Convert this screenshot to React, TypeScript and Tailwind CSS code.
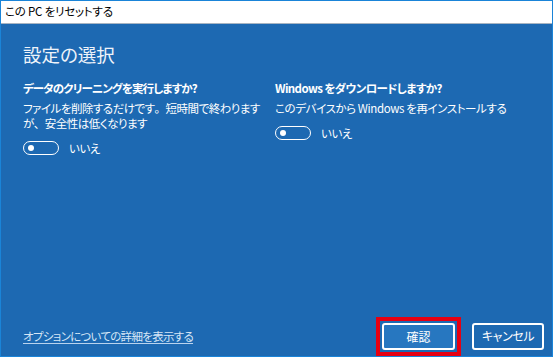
import React from "react";

const jp = "font-['Noto_Sans_CJK_JP','Noto_Sans',sans-serif] [font-feature-settings:'palt']";
const np = "[font-feature-settings:normal]";

function Toggle() {
  return (
    <div className="flex items-center h-[16px]">
      <div className="w-[36px] h-[14px] rounded-full border-[1.5px] border-white flex items-center pl-[4px]">
        <div className="w-[6px] h-[6px] rounded-full bg-white" />
      </div>
      <span className="ml-[10px] text-[11.5px] leading-[16px] tracking-[-0.4px] text-white">いいえ</span>
    </div>
  );
}

export default function App() {
  return (
    <div className={`w-[553px] h-[357px] border border-[#1a84d8] flex flex-col bg-[#1d69b2] ${jp}`}>
      <div className="h-[23px] bg-white border-b border-[#a7b4c2] flex items-center pl-[4px] text-[11.5px] tracking-[-0.2px] text-black">
        この PC をリセットする
      </div>
      <div className="flex-1 flex flex-col">
        <div className="pl-[22px] pt-[17px] text-[18.5px] leading-[26px] text-[#eef3fa]">設定の選択</div>
        <div className="grid grid-cols-[252px_1fr] pl-[22px] mt-[13px] text-white">
          <div className="flex flex-col">
            <div className="text-[11.5px] leading-[16px] font-bold tracking-[-0.9px]">データのクリーニングを実行しますか?</div>
            <div className="mt-[5px] text-[11.5px] leading-[15px] tracking-[-0.5px]">
              ファイルを削除するだけです<span className={np}>。</span>短時間で終わります
              <br />
              が<span className={np}>、</span>安全性は低くなります
            </div>
            <div className="mt-[9px]">
              <Toggle />
            </div>
          </div>
          <div className="flex flex-col">
            <div className="text-[11.5px] leading-[16px] font-bold tracking-[-0.6px]">Windows をダウンロードしますか?</div>
            <div className="mt-[5px] text-[11.5px] leading-[15px] tracking-[-0.4px]">このデバイスから Windows を再インストールする</div>
            <div className="mt-[9px]">
              <Toggle />
            </div>
          </div>
        </div>
        <div className="flex-1" />
        <div className="flex items-center pl-[22px] pr-[8px] pb-[6px]">
          <a className="text-[11.5px] leading-[16px] tracking-[-0.7px] text-[#d6e6f6] underline underline-offset-2 decoration-[#b9d3ee]">
            オプションについての詳細を表示する
          </a>
          <div className="flex-1" />
          <div className="relative">
            <button className="w-[73px] h-[27px] rounded-[3px] border-2 border-white bg-[#2777c0] text-white text-[12px]">
              確認
            </button>
            <div className="absolute -inset-[6px] border-4 border-[#e60012] pointer-events-none" />
          </div>
          <button className="ml-[17px] w-[72px] h-[27px] rounded-[3px] border-2 border-white bg-[#1d69b2] text-white text-[12px] tracking-[-0.4px]">
            キャンセル
          </button>
        </div>
      </div>
    </div>
  );
}
